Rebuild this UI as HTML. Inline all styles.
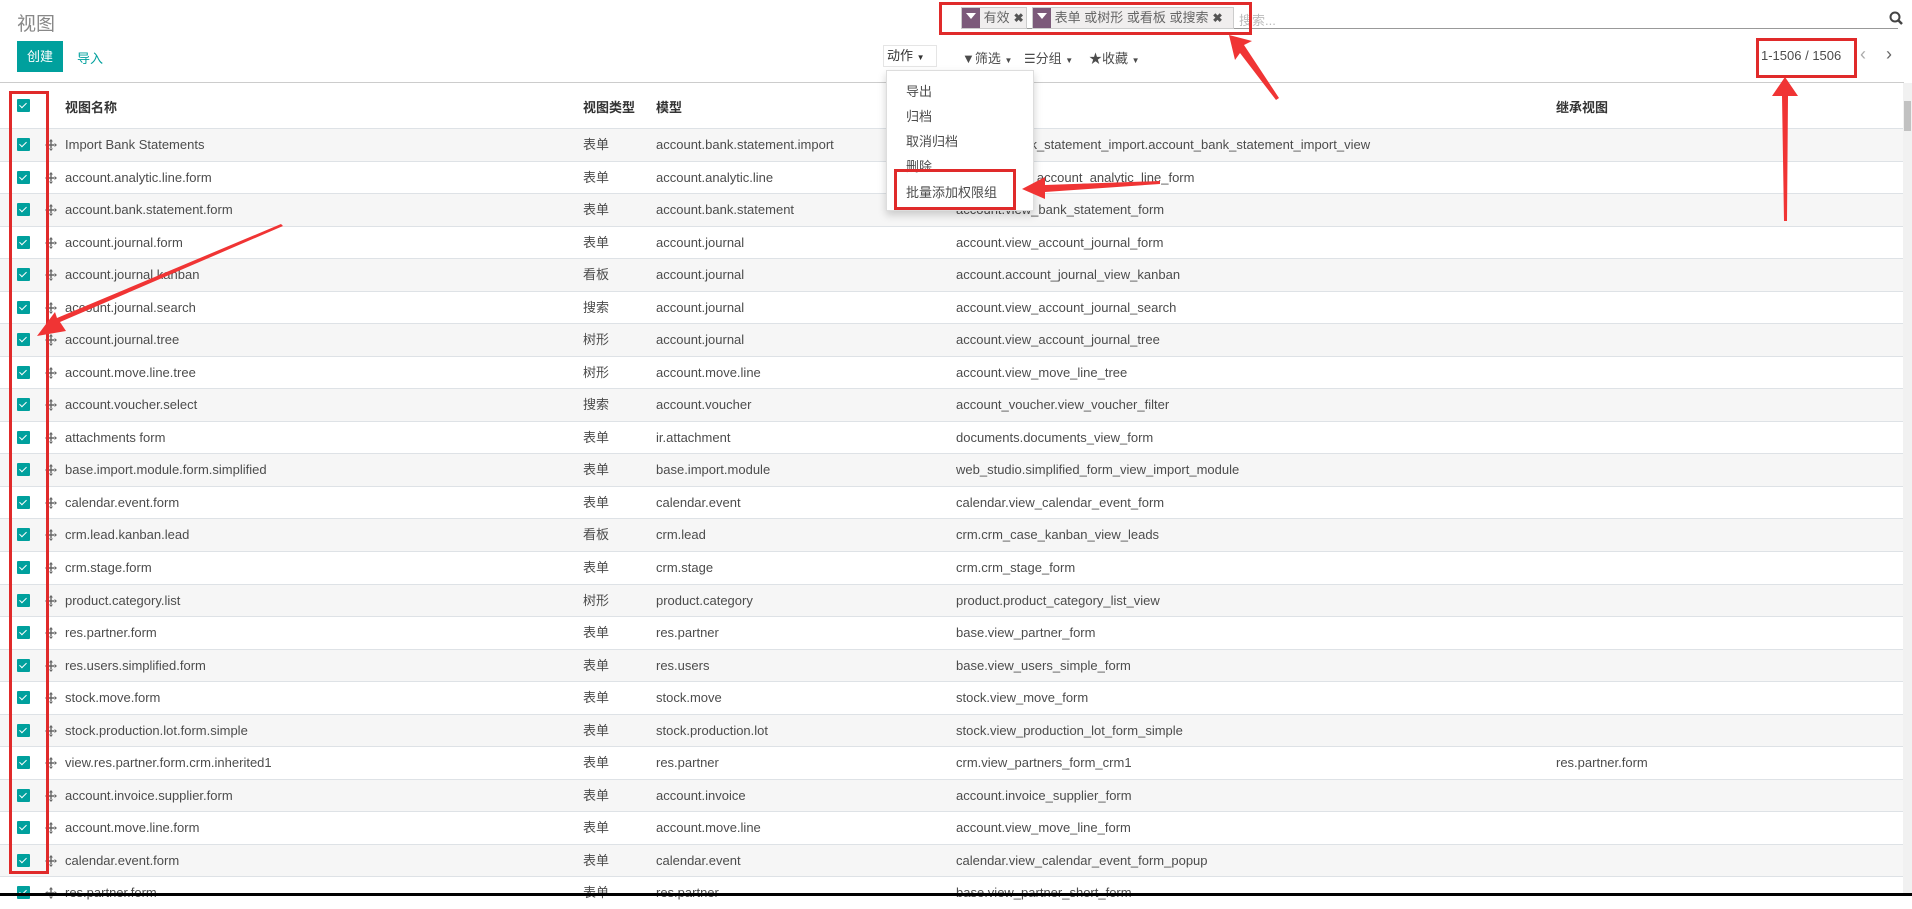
<!DOCTYPE html>
<html><head><meta charset="utf-8"><style>
*{margin:0;padding:0;box-sizing:border-box}
body{width:1912px;height:896px;overflow:hidden;background:#fff;font-family:"Liberation Sans","Noto Sans CJK SC",sans-serif;font-size:13px;color:#4c4c4c;position:relative}
.a{position:absolute;white-space:nowrap}
.row{position:absolute;left:0;width:1904px;height:32.5px;border-top:1px solid #dee2e6}
.row.s{background:#f6f6f6}
.cb{position:absolute;left:17px;width:13px;height:13px;background:#00a09d;border-radius:1px}
.cb:after{content:"";position:absolute;left:4px;top:2px;width:3px;height:6px;border:solid #fff;border-width:0 1.5px 1.5px 0;transform:rotate(45deg)}
.row .cb{top:9px}
.row svg{position:absolute;top:10px}
.row span{position:absolute;top:0;line-height:31px;height:31px}
.fac{position:absolute;top:7px;height:22px;border:1px solid #ccc;background:#f0eeee;font-size:13px;line-height:20px;color:#666}
.fac i{display:inline-block;width:18px;height:20px;background:#7c5a7a;vertical-align:top;position:relative}
.fac i:after{content:"";position:absolute;left:4px;top:5px;border-left:5px solid transparent;border-right:5px solid transparent;border-top:6px solid #fff}
.fac b{font-weight:bold;color:#555;margin-left:4px;font-size:12px}
.red{position:absolute;border:3px solid #e02a2a}
.dd a{display:block;position:absolute;left:19px;color:#4c4c4c;text-decoration:none}
</style></head><body>
<div class="a" style="left:17px;top:9px;font-size:19px;color:#888">视图</div>
<div class="a" style="left:17px;top:41px;width:46px;height:31px;background:#00a09d;color:#fff;line-height:31px;text-align:center">创建</div>
<div class="a" style="left:77px;top:48px;color:#00a09d">导入</div>

<div class="a" style="left:961px;top:28px;width:937px;height:1px;background:#999"></div>
<div class="fac" style="left:961px;width:66px"><i></i> 有效<b>✖</b></div>
<div class="fac" style="left:1032px;width:202px"><i></i> 表单 或树形 或看板 或搜索<b>✖</b></div>
<div class="a" style="left:1239px;top:10px;color:#bbb">搜索...</div>
<svg class="a" style="left:1889px;top:11px" width="14" height="15"><circle cx="6" cy="6" r="4.5" fill="none" stroke="#444" stroke-width="2"/><path d="M9 9l4 4" stroke="#444" stroke-width="2.5"/></svg>

<div class="a" style="left:883px;top:45px;width:54px;height:22px;border:1px solid #e5e5e5;line-height:20px;padding-left:3px;color:#333">动作 <span style="font-size:8px">▼</span></div>
<div class="a" style="left:962px;top:48px;color:#4c4c4c">▼筛选 <span style="font-size:8px">▼</span></div>
<div class="a" style="left:1024px;top:48px;color:#4c4c4c">☰分组 <span style="font-size:8px">▼</span></div>
<div class="a" style="left:1089px;top:48px;color:#4c4c4c">★收藏 <span style="font-size:8px">▼</span></div>
<div class="a" style="left:1761px;top:48px;color:#4c4c4c">1-1506 / 1506</div>
<div class="a" style="left:1860px;top:44px;font-size:18px;color:#aaa">‹</div>
<div class="a" style="left:1886px;top:44px;font-size:18px;color:#666">›</div>
<div class="a" style="left:0;top:82px;width:1904px;height:1px;background:#ccc"></div>

<div class="a" style="left:0;top:83px;width:1904px;height:45px;background:#fff;box-shadow:0 2px 3px rgba(0,0,0,.06)"></div>
<div class="cb" style="top:99px"></div>
<div class="a" style="left:65px;top:97px;font-weight:bold;color:#333">视图名称</div>
<div class="a" style="left:583px;top:97px;font-weight:bold;color:#333">视图类型</div>
<div class="a" style="left:656px;top:97px;font-weight:bold;color:#333">模型</div>
<div class="a" style="left:1556px;top:97px;font-weight:bold;color:#333">继承视图</div>

<div id="rows"></div>
<script>
var d=[["Import Bank Statements","表单","account.bank.statement.import","account_bank_statement_import.account_bank_statement_import_view",""],
["account.analytic.line.form","表单","account.analytic.line","analytic.view_account_analytic_line_form",""],
["account.bank.statement.form","表单","account.bank.statement","account.view_bank_statement_form",""],
["account.journal.form","表单","account.journal","account.view_account_journal_form",""],
["account.journal.kanban","看板","account.journal","account.account_journal_view_kanban",""],
["account.journal.search","搜索","account.journal","account.view_account_journal_search",""],
["account.journal.tree","树形","account.journal","account.view_account_journal_tree",""],
["account.move.line.tree","树形","account.move.line","account.view_move_line_tree",""],
["account.voucher.select","搜索","account.voucher","account_voucher.view_voucher_filter",""],
["attachments form","表单","ir.attachment","documents.documents_view_form",""],
["base.import.module.form.simplified","表单","base.import.module","web_studio.simplified_form_view_import_module",""],
["calendar.event.form","表单","calendar.event","calendar.view_calendar_event_form",""],
["crm.lead.kanban.lead","看板","crm.lead","crm.crm_case_kanban_view_leads",""],
["crm.stage.form","表单","crm.stage","crm.crm_stage_form",""],
["product.category.list","树形","product.category","product.product_category_list_view",""],
["res.partner.form","表单","res.partner","base.view_partner_form",""],
["res.users.simplified.form","表单","res.users","base.view_users_simple_form",""],
["stock.move.form","表单","stock.move","stock.view_move_form",""],
["stock.production.lot.form.simple","表单","stock.production.lot","stock.view_production_lot_form_simple",""],
["view.res.partner.form.crm.inherited1","表单","res.partner","crm.view_partners_form_crm1","res.partner.form"],
["account.invoice.supplier.form","表单","account.invoice","account.invoice_supplier_form",""],
["account.move.line.form","表单","account.move.line","account.view_move_line_form",""],
["calendar.event.form","表单","calendar.event","calendar.view_calendar_event_form_popup",""],
["res.partner.form","表单","res.partner","base.view_partner_short_form",""]];
var h="";
d.forEach(function(r,i){var top=128+i*32.54;
h+='<div class="row'+(i%2==0?' s':'')+'" style="top:'+top+'px">'+
'<div class="cb"></div>'+
'<svg style="left:45px" width="12" height="12" viewBox="0 0 12 12"><path d="M6 0l2 2.5H4zM6 12l2-2.5H4zM0 6l2.5-2v4zM12 6l-2.5-2v4zM5.3 2h1.4v8H5.3zM2 5.3h8v1.4H2z" fill="#666"/></svg>'+
'<span style="left:65px">'+r[0]+'</span><span style="left:583px">'+r[1]+'</span><span style="left:656px">'+r[2]+'</span><span style="left:956px">'+r[3]+'</span><span style="left:1556px">'+r[4]+'</span></div>';});
document.getElementById("rows").innerHTML=h;
</script>

<div class="a" style="left:1903px;top:83px;width:9px;height:813px;background:#f1f1f1"></div>
<div class="a" style="left:1904px;top:101px;width:7px;height:30px;background:#c1c1c1"></div>
<div class="a" style="left:0;top:893px;width:1912px;height:3px;background:#000"></div>

<div class="a dd" style="left:886px;top:70px;width:148px;height:141px;background:#fff;border:1px solid #ddd;box-shadow:0 4px 8px rgba(0,0,0,.18)">
<a style="top:10px">导出</a><a style="top:35px">归档</a><a style="top:60px">取消归档</a><a style="top:85px">删除</a><a style="top:111px">批量添加权限组</a></div>

<div class="red" style="left:939px;top:2px;width:313px;height:33px"></div>
<div class="red" style="left:1756px;top:38px;width:101px;height:40px"></div>
<div class="red" style="left:894px;top:169px;width:122px;height:41px"></div>
<div class="red" style="left:9px;top:91px;width:40px;height:783px"></div>

<svg class="a" style="left:0;top:0" width="1912" height="896">
<g fill="#f03434">
<path d="M283 226 L60 322 L66 331 L37 336 L55 312 L57 318 L281 224Z"/>
<path d="M1279 98 L1244 45 L1252 41 L1229 35 L1235 60 L1240 53 L1276 100Z"/>
<path d="M1784 221 L1782 96 L1772 96 L1785 77 L1798 96 L1788 96 L1787 221Z"/>
<path d="M1160 181 L1045 185 L1045 177 L1022 189 L1045 199 L1045 192 L1160 184Z"/>
</g></svg>
</body></html>
